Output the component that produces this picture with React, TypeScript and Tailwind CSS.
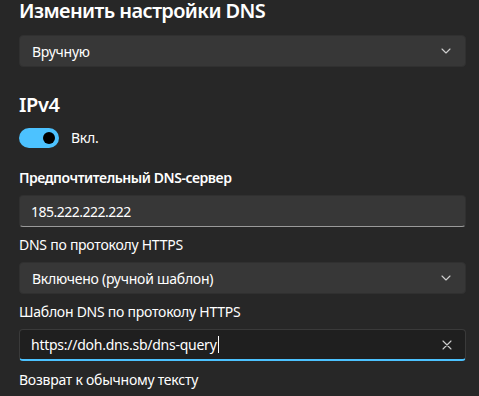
import React from 'react';

const font = { fontFamily: '"Noto Sans", "Open Sans", sans-serif' };

const Chevron = () => (
  <svg width="10" height="6" viewBox="0 0 10 6" fill="none">
    <path d="M1 1l4 4 4-4" stroke="#cfcfcf" strokeWidth="1.1" strokeLinecap="round" strokeLinejoin="round" />
  </svg>
);

const Select = ({ value, className }: { value: string; className?: string }) => (
  <div className={`flex h-8 items-center justify-between rounded-[4px] border border-[#303030] bg-[#373737] pl-3 pr-[14px] text-[14px] tracking-[-0.25px] text-white ${className ?? ''}`}>
    <span>{value}</span>
    <Chevron />
  </div>
);

export default function App() {
  return (
    <div className="h-screen overflow-hidden bg-[#272727] pl-[19px] pr-[13px] text-white" style={font}>
      <h1 className="text-[20px] font-semibold leading-[22px] tracking-[-0.6px]">Изменить настройки DNS</h1>
      <Select value="Вручную" className="mt-[13px]" />

      <h2 className="mt-[26px] text-[20px] font-semibold leading-[24px] tracking-[-0.4px]">IPv4</h2>
      <div className="mt-[11px] flex items-center gap-3">
        <div className="flex h-5 w-10 items-center justify-end rounded-full bg-[#4cc2ff] pr-1">
          <div className="h-3 w-3 rounded-full bg-black" />
        </div>
        <span className="text-[14px] leading-5 tracking-[-0.25px]">Вкл.</span>
      </div>

      <div className="mt-5 text-[14px] font-semibold leading-5 tracking-[-0.45px]">Предпочтительный DNS-сервер</div>
      <div className="mt-[7px] flex h-8 items-center rounded-[4px] border border-[#303030] border-b-[#9a9a9a] bg-[#373737] px-[11px] text-[14px] tracking-[-0.5px]">
        185.222.222.222
      </div>

      <div className="mt-2 text-[14px] leading-5 tracking-[-0.25px]">DNS по протоколу HTTPS</div>
      <Select value="Включено (ручной шаблон)" className="mt-[7px]" />

      <div className="mt-2 text-[14px] leading-5 tracking-[-0.25px]">Шаблон DNS по протоколу HTTPS</div>
      <div className="mt-[7px] flex h-8 items-center justify-between rounded-[4px] border border-[#3a3a3a] border-b-2 border-b-[#4cc2ff] bg-[#1f1f1f] pl-[11px] pr-[13px] text-[14px] tracking-[-0.25px]">
        <span className="flex items-center">
          https://doh.dns.sb/dns-query
          <span className="ml-px inline-block h-[17px] w-px bg-white" />
        </span>
        <svg width="10" height="10" viewBox="0 0 10 10">
          <path d="M1 1l8 8M9 1l-8 8" stroke="#cfcfcf" strokeWidth="1.1" strokeLinecap="round" />
        </svg>
      </div>

      <div className="mt-[9px] text-[14px] leading-5 tracking-[-0.25px]">Возврат к обычному тексту</div>
    </div>
  );
}
